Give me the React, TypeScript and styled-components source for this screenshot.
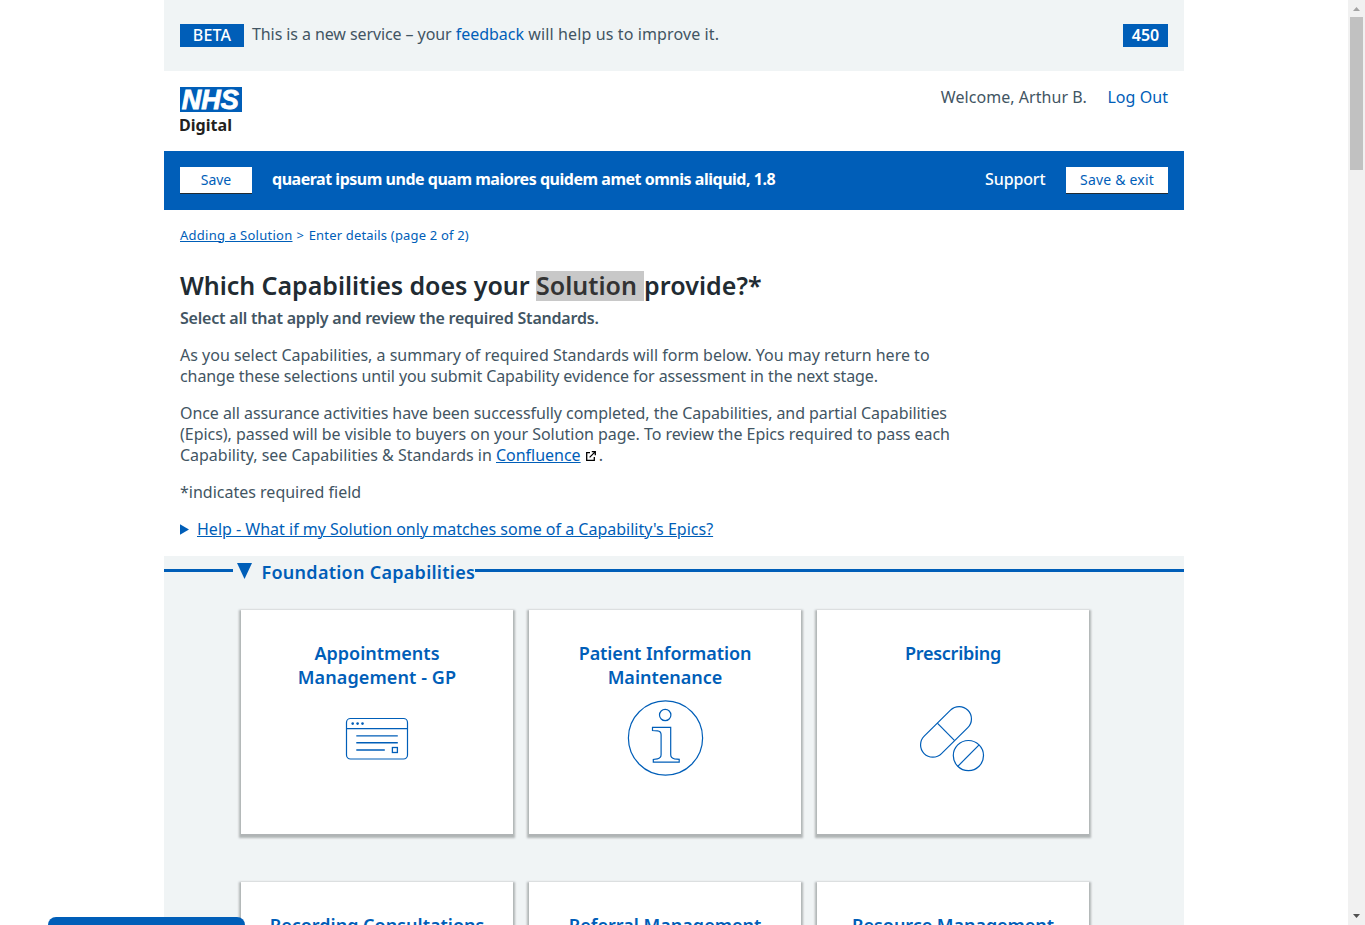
import React from "react";
import styled, { createGlobalStyle } from "styled-components";

const blue = "#005eb8";
const grey = "#425563";
const pale = "#f0f4f5";

const GlobalStyle = createGlobalStyle`
  *, *::before, *::after { box-sizing: border-box; }
  html, body { margin: 0; padding: 0; background: #fff; overflow: hidden; }
  body {
    font-family: "Noto Sans", "Open Sans", sans-serif;
    font-size: 16px;
    line-height: 21px;
    color: ${grey};
  }
  h1, h2, h3, p { margin: 0; }
`;

const Viewport = styled.div`
  display: flex;
  height: 925px;
  overflow: hidden;
`;

const Main = styled.main`
  flex: 1;
  min-width: 0;
  overflow: hidden;
`;

const Page = styled.div`
  width: 1020px;
  margin: 0 auto;
`;

const Track = styled.span<{ $by: number }>`
  letter-spacing: ${(p) => p.$by}px;
  white-space: pre;
`;

const BetaBar = styled.div`
  display: flex;
  align-items: flex-start;
  height: 71px;
  padding: 24px 16px;
  background: ${pale};
`;

const Badge = styled.strong<{ $width: number; $weight: number }>`
  width: ${(p) => p.$width}px;
  height: 23px;
  line-height: 22px;
  text-align: center;
  font-weight: ${(p) => p.$weight};
  color: #fff;
  background: ${blue};
`;

const Notice = styled.p`
  flex: 1;
  padding-left: 8px;
  line-height: 20px;
  white-space: nowrap;
`;

const PlainLink = styled.a`
  color: ${blue};
`;

const Header = styled.header`
  display: flex;
  justify-content: space-between;
  align-items: flex-start;
  height: 80px;
  padding: 16px;
`;

const Account = styled.div`
  display: flex;
  gap: 20.5px;
`;

const Toolbar = styled.div`
  display: flex;
  align-items: flex-start;
  height: 59px;
  padding: 16px;
  color: #fff;
  background: ${blue};
`;

const Button = styled.button<{ $width: number }>`
  width: ${(p) => p.$width}px;
  height: 26px;
  padding: 0;
  border: 0;
  font-family: inherit;
  font-size: 14px;
  line-height: 26px;
  color: ${blue};
  background: #fff;
  box-shadow: 0 1px 0 #212b32;
`;

const SolutionName = styled.strong`
  flex: 1;
  padding-left: 20px;
  line-height: 24px;
  font-weight: 700;
`;

const Support = styled.a`
  margin-right: 20.5px;
  line-height: 24px;
  font-weight: 500;
`;

const Content = styled.section`
  padding: 15px 16px 16px;
`;

const Breadcrumb = styled.nav`
  margin-bottom: 26px;
  font-size: 13px;
  line-height: 20px;
  color: ${blue};
`;

const Link = styled.a`
  color: ${blue};
  text-decoration: underline;
  text-decoration-thickness: 1px;
  text-underline-offset: 1px;
`;

const Title = styled.h1`
  display: flex;
  height: 37px;
  font-size: 25px;
  font-weight: 600;
  line-height: 29px;
  color: #212b32;
`;

const Selected = styled.span`
  width: 108px;
  height: 30px;
  color: #333;
  background: #c8c8c8;
`;

const Lead = styled.p`
  font-weight: 600;
`;

const Paragraph = styled.p`
  margin-top: 16px;
`;

const Line = styled.span<{ $track?: number }>`
  display: block;
  white-space: nowrap;
  letter-spacing: ${(p) => p.$track ?? 0}px;
`;

const ExternalIcon = styled.svg`
  margin: 0 3px 0 5px;
  vertical-align: 0;
`;

const Help = styled.div`
  display: flex;
  align-items: center;
  gap: 8px;
  margin-top: 16px;
`;

const Capabilities = styled.section`
  background: ${pale};
`;

const GroupHeading = styled.div`
  display: flex;
  align-items: center;
  height: 29px;
`;

const Rule = styled.span<{ $width?: number }>`
  flex: ${(p) => (p.$width ? `0 0 ${p.$width}px` : "1")};
  height: 3px;
  background: ${blue};
`;

const GroupName = styled.h2`
  display: flex;
  align-items: center;
  gap: 10px;
  padding-left: 3.5px;
  font-size: 18px;
  font-weight: 600;
  letter-spacing: 0.27px;
  color: ${blue};
`;

const GroupLabel = styled.span`
  padding-top: 2px;
  line-height: 24px;
`;

const CardGrid = styled.div`
  display: grid;
  grid-template-columns: repeat(3, 272px);
  grid-auto-rows: 224px;
  gap: 48px 16px;
  padding: 25px 0 0 77px;
`;

const Card = styled.article`
  display: flex;
  flex-direction: column;
  align-items: center;
  padding-top: 31px;
  background: #fff;
  box-shadow: 0 1.5px 2px 2px #b0b4b5;
`;

const CardTitle = styled.h3`
  height: 48px;
  margin-bottom: 9px;
  font-size: 18px;
  font-weight: 600;
  line-height: 24px;
  text-align: center;
  color: ${blue};
`;

const CardIcon = styled.svg`
  width: 80px;
  height: 80px;
  fill: none;
  stroke: ${blue};
  stroke-width: 1.2;
`;

const BottomTab = styled.div`
  position: fixed;
  left: 48px;
  bottom: 0;
  width: 197px;
  height: 8px;
  border-radius: 9px 9px 0 0;
  background: ${blue};
`;

const Scrollbar = styled.div`
  display: flex;
  flex-direction: column;
  align-items: center;
  width: 17px;
  background: #f1f1f1;
`;

const Thumb = styled.div`
  width: 13px;
  height: 153px;
  margin-bottom: auto;
  background: #c1c1c1;
`;

function NhsLogo() {
  return (
    <svg width="64" height="50" viewBox="0 0 64 50">
      <rect width="62" height="25" fill={blue} />
      <text
        x="1.8"
        y="22.3"
        fontFamily="Liberation Sans"
        fontSize="27.5"
        fontWeight="700"
        fontStyle="italic"
        fill="#fff"
        stroke="#fff"
        strokeWidth="0.9"
        textLength="57"
        lengthAdjust="spacingAndGlyphs"
      >
        NHS
      </text>
      <text x="-1" y="44" fontSize="16.5" fontWeight="700" fill="#231f20" textLength="53" lengthAdjust="spacingAndGlyphs">
        Digital
      </text>
    </svg>
  );
}

function BrowserIcon() {
  return (
    <CardIcon viewBox="0 0 80 80">
      <rect x="9.5" y="20.5" width="61" height="40.5" rx="4" />
      <path d="M9.5 30.6H70.5" strokeWidth="1.4" />
      <path d="M19.3 37.9H60.8M19.3 44.8H60.8M19.3 52H47.8" strokeWidth="1.4" />
      <rect x="55.4" y="49.5" width="5" height="5" strokeWidth="1.3" />
      <g fill={blue} stroke="none">
        <circle cx="15.7" cy="25.6" r="1.3" />
        <circle cx="20.6" cy="25.6" r="1.3" />
        <circle cx="25.5" cy="25.6" r="1.3" />
      </g>
    </CardIcon>
  );
}

function InfoIcon() {
  return (
    <CardIcon viewBox="0 0 80 80">
      <circle cx="40.5" cy="40" r="37.1" />
      <circle cx="40.2" cy="17" r="5.7" />
      <path d="M27.5 29.4H45.7V56.5Q45.7 60.2 49.5 60.8L54.2 61.4V64.2H28.3V61.4L32.4 60.8Q36.1 60.2 36.1 56.5V36.8Q36.1 33.2 32.5 32.9L27.5 32.5Z" />
    </CardIcon>
  );
}

function PillsIcon() {
  return (
    <CardIcon viewBox="0 0 80 80">
      <g transform="rotate(-44.7 33 33.9)">
        <rect x="2.2" y="21.6" width="61.6" height="24.6" rx="12.3" />
        <path d="M33 21.6V46.2" />
      </g>
      <circle cx="55.4" cy="57.6" r="15.1" />
      <path d="M44.8 68.3L66.1 46.9" />
    </CardIcon>
  );
}

export default function App() {
  return (
    <>
      <GlobalStyle />
      <Viewport>
        <Main>
          <Page>
            <BetaBar>
              <Badge $width={64} $weight={500}>
                <Track $by={0.2}>BETA</Track>
              </Badge>
              <Notice>
                <Track $by={-0.09}>This is a new service – your </Track>
                <PlainLink>feedback</PlainLink>
                <Track $by={0.12}> will help us to improve it.</Track>
              </Notice>
              <Badge $width={45} $weight={600}>450</Badge>
            </BetaBar>
            <Header>
              <NhsLogo />
              <Account>
                <Track $by={0.05}>Welcome, Arthur B.</Track>
                <PlainLink>
                  <Track $by={0.05}>Log Out</Track>
                </PlainLink>
              </Account>
            </Header>
            <Toolbar>
              <Button $width={72}>Save</Button>
              <SolutionName>
                <Track $by={-0.48}>quaerat ipsum unde quam maiores quidem amet omnis aliquid, 1.8</Track>
              </SolutionName>
              <Support>
                <Track $by={-0.13}>Support</Track>
              </Support>
              <Button $width={102}>
                <Track $by={0.2}>Save &amp; exit</Track>
              </Button>
            </Toolbar>
            <Content>
              <Breadcrumb>
                <Link>
                  <Track $by={0.26}>Adding a Solution</Track>
                </Link>
                <Track $by={0.65}>{" > "}</Track>
                <Track $by={0.18}>Enter details (page 2 of 2)</Track>
              </Breadcrumb>
              <Title>
                <Track $by={-0.04}>Which Capabilities does your </Track>
                <Selected>Solution</Selected>
                <Track $by={0.06}>provide?*</Track>
              </Title>
              <Lead>
                <Track $by={-0.21}>Select all that apply and review the required Standards.</Track>
              </Lead>
              <Paragraph>
                <Line>As you select Capabilities, a summary of required Standards will form below. You may return here to</Line>
                <Line $track={-0.095}>change these selections until you submit Capability evidence for assessment in the next stage.</Line>
              </Paragraph>
              <Paragraph>
                <Line $track={-0.07}>Once all assurance activities have been successfully completed, the Capabilities, and partial Capabilities</Line>
                <Line $track={-0.035}>(Epics), passed will be visible to buyers on your Solution page. To review the Epics required to pass each</Line>
                <Line $track={-0.02}>
                  Capability, see Capabilities &amp; Standards in <Link>Confluence</Link>
                  <ExternalIcon width="10" height="10" viewBox="0 0 10 10" fill="none" stroke="#000" strokeWidth="1.3">
                    <path d="M4 1.7H0.7V9.3H8.3V6M5.8 0.7H9.3V4.2M9.1 0.9L3.6 6.4" />
                  </ExternalIcon>
                  .
                </Line>
              </Paragraph>
              <Paragraph>*indicates required field</Paragraph>
              <Help>
                <svg width="9" height="11" viewBox="0 0 9 11">
                  <path d="M0 0.3L9 5.5L0 10.7Z" fill={blue} />
                </svg>
                <Link>Help - What if my Solution only matches some of a Capability's Epics?</Link>
              </Help>
            </Content>
            <Capabilities>
              <GroupHeading>
                <Rule $width={69} />
                <GroupName>
                  <svg width="15" height="16" viewBox="0 0 15 16">
                    <path d="M0 0H15L7.5 16Z" fill={blue} />
                  </svg>
                  <GroupLabel>Foundation Capabilities</GroupLabel>
                </GroupName>
                <Rule />
              </GroupHeading>
              <CardGrid>
                <Card>
                  <CardTitle>Appointments<br /><Track $by={0.1}>Management - GP</Track></CardTitle>
                  <BrowserIcon />
                </Card>
                <Card>
                  <CardTitle><Track $by={-0.1}>Patient Information</Track><br />Maintenance</CardTitle>
                  <InfoIcon />
                </Card>
                <Card>
                  <CardTitle><Track $by={-0.27}>Prescribing</Track></CardTitle>
                  <PillsIcon />
                </Card>
                <Card><CardTitle>Recording Consultations</CardTitle></Card>
                <Card><CardTitle>Referral Management</CardTitle></Card>
                <Card><CardTitle><Track $by={-0.05}>Resource Management</Track></CardTitle></Card>
              </CardGrid>
            </Capabilities>
          </Page>
        </Main>
        <Scrollbar>
          <svg width="17" height="17" viewBox="0 0 17 17">
            <path d="M5 11L8.5 7L12 11Z" fill="#a3a3a3" />
          </svg>
          <Thumb />
          <svg width="17" height="17" viewBox="0 0 17 17">
            <path d="M5 6L8.5 10L12 6Z" fill="#505050" />
          </svg>
        </Scrollbar>
      </Viewport>
      <BottomTab />
    </>
  );
}
